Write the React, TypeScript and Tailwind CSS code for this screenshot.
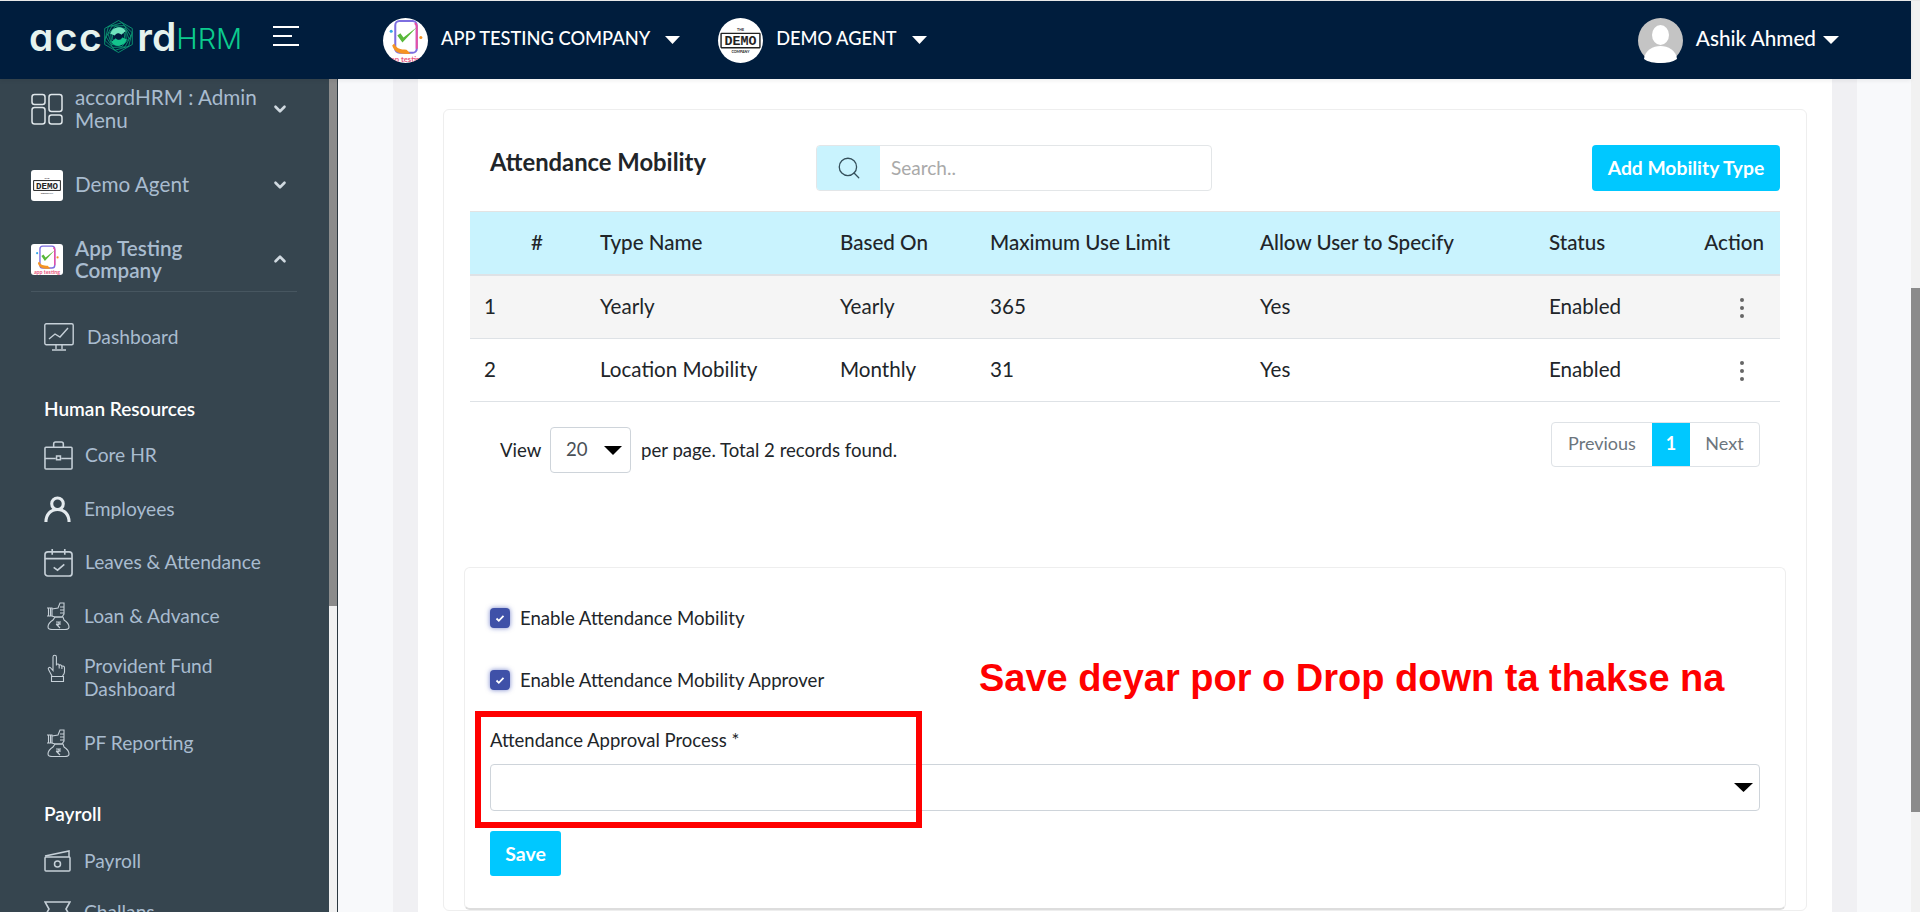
import React from 'react';
import { ChevronDown, ChevronUp, Search } from 'lucide-react';

const iconColor = '#c6d0d8';

function Triangle({ className }: { className: string }) {
  return (
    <svg viewBox="0 0 16 8" preserveAspectRatio="none" className={className} fill="currentColor">
      <path d="M0 0h16L8 8z" />
    </svg>
  );
}

// hexagon swirl in the logo, the "o" of accord
function LogoMark() {
  const rings = [0, 1, 2, 3, 4, 5];
  return (
    <svg viewBox="-17 -18 34 36" className="w-[31px] h-[35px] shrink-0">
      {rings.map((i) => {
        const r = 17.5 - i * 2;
        const pts = [0, 60, 120, 180, 240, 300]
          .map((a) => {
            const t = ((a + i * 14 - 90) * Math.PI) / 180;
            return `${(r * Math.cos(t)).toFixed(2)},${(r * Math.sin(t)).toFixed(2)}`;
          })
          .join(' ');
        return <polygon key={i} points={pts} fill="none" stroke="#0fb57f" strokeWidth="0.8" />;
      })}
      <path d="M-9 -3A9.500 9.500 0 0 1 8 -6L3 -2A4 4 0 0 0 -4 -1z" fill="#6fe3bc" />
      <path d="M9 3A9.500 9.500 0 0 1 -8 6L-3 2A4 4 0 0 0 4 1z" fill="#14c48c" />
      <circle r="3" fill="#001d3d" />
    </svg>
  );
}

function AppTestingLogo({ className }: { className: string }) {
  return (
    <svg viewBox="0 0 44 44" className={className}>
      <rect x="12" y="3" width="21" height="31" rx="4" fill="none" stroke="#7d6ee0" strokeWidth="2" />
      <path d="M31 5a4 4 0 0 1 2 3v22" fill="none" stroke="#e84fa5" strokeWidth="2" />
      <path d="M9 27c2 7 8 9 18 8l-4-4c-6 0-10-1-12-6z" fill="#f59323" />
      <path d="M14 17l5 7L33 9l-13 10-3-4z" fill="#59b83a" />
      <circle cx="8" cy="13" r="1.500" fill="#35a7e8" />
      <circle cx="37" cy="19" r="1.500" fill="#f59323" />
      <text x="22" y="43" textAnchor="middle" fontSize="7.500" fontWeight="700" fill="#e8567f" fontFamily="Lato, sans-serif">
        app testing
      </text>
    </svg>
  );
}

function DemoLogo({ className }: { className: string }) {
  return (
    <svg viewBox="0 0 44 44" className={className}>
      <path d="M3 15h38M3 29h38M3 15v14M41 15v14" fill="none" stroke="#222" strokeWidth="1.400" />
      <text x="22" y="12.500" textAnchor="middle" fontSize="3.500" fontWeight="700" fill="#222" fontFamily="Lato, sans-serif">THE</text>
      <text x="22" y="26.500" textAnchor="middle" fontSize="13" fontWeight="700" fill="#222" fontFamily="Liberation Mono, monospace">DEMO</text>
      <text x="22" y="34" textAnchor="middle" fontSize="3.500" fontWeight="700" fill="#222" fontFamily="Lato, sans-serif">COMPANY</text>
    </svg>
  );
}

function MenuGridIcon() {
  return (
    <svg viewBox="0 0 32 32" className="w-[32px] h-[32px] shrink-0" fill="none" stroke="#dfe6ea" strokeWidth="1.500">
      <rect x="1" y="1.500" width="13" height="10" rx="2.500" />
      <rect x="18" y="1.500" width="13" height="17" rx="2.500" />
      <rect x="1" y="14.500" width="13" height="16.500" rx="2.500" />
      <rect x="18" y="22" width="13" height="9" rx="2.500" />
    </svg>
  );
}

function DashboardIcon() {
  return (
    <svg viewBox="0 0 30 28" className="w-[30px] h-[28px]" fill="none" stroke={iconColor} strokeWidth="1.400">
      <rect x="0.800" y="0.800" width="28.400" height="21" rx="1.500" />
      <path d="M5 16l6-5 5 3 8-9" />
      <path d="M12 22v4M18 22v4M8 27h14" />
    </svg>
  );
}

function BriefcaseIcon() {
  return (
    <svg viewBox="0 0 30 30" className="w-[29px] h-[29px]" fill="none" stroke={iconColor} strokeWidth="1.600">
      <rect x="1" y="6.500" width="28" height="22.500" rx="1" />
      <path d="M10 6.500V3a2 2 0 0 1 2-2h6a2 2 0 0 1 2 2v3.500M1 18h11M18 18h11M13 15.500h4v4h-4z" />
    </svg>
  );
}

function UserIcon() {
  return (
    <svg viewBox="0 0 28 28" className="w-[27px] h-[27px]" fill="none" stroke="#e4eaee" strokeWidth="3.200">
      <circle cx="14" cy="8" r="6" />
      <path d="M2 27c0-8 5-13 12-13s12 5 12 13" />
    </svg>
  );
}

function CalendarIcon() {
  return (
    <svg viewBox="0 0 30 30" className="w-[29px] h-[29px]" fill="none" stroke={iconColor} strokeWidth="1.700">
      <rect x="1" y="4" width="28" height="25" rx="3" />
      <path d="M1 11h28M8.500 1v6M21.500 1v6M10 20l4 3 7-6" />
    </svg>
  );
}

function LoanIcon() {
  return (
    <svg viewBox="0 0 24 28" className="w-[24px] h-[28px]" fill="none" stroke={iconColor} strokeWidth="1.100">
      <path d="M1 6h5v8H1M2.500 6v8M4.500 6v8" />
      <path d="M6 7l6-1 2-5h4v11l-2 3H9l-3-1" />
      <path d="M14 5h4M14 8h4M14 11h4" />
      <path d="M9 15h8l1 3c3 2 5 5 5 7 0 2-2 2.500-4 2.500H6c-2 0-4-.5-4-2.500 0-2 2-5 5-7z" />
      <path d="M10 20h5M10 22h5M11 20c3 0 3 3 0 3l3 3" />
    </svg>
  );
}

// index finger up with a cuff at the wrist
function HandIcon() {
  return (
    <svg viewBox="0 0 20 28" className="w-[20px] h-[28px]" fill="none" stroke={iconColor} strokeWidth="1.100">
      <path d="M5 22L1.500 15.500c-.8-1.600 1-2.800 2.200-1.500L6 16.500V3a1.700 1.700 0 0 1 3.400 0v8.500" />
      <path d="M9.400 10.500c1-1 2.600-.6 2.800.8 1-.9 2.500-.4 2.700 1 1.200-.7 2.600 0 2.600 1.500V18c0 1.500-1 3-2 4" />
      <path d="M12.200 11.500v3M14.900 12.500v2.500" />
      <path d="M4.500 22.500h12v5h-12z" />
    </svg>
  );
}

function CashIcon() {
  return (
    <svg viewBox="0 0 27 22" className="w-[27px] h-[22px]" fill="none" stroke={iconColor} strokeWidth="1.500">
      <path d="M1 6l24-5v6" />
      <rect x="1" y="7" width="25" height="14" rx="1" />
      <circle cx="13.500" cy="14" r="3" />
    </svg>
  );
}

function ChallanIcon() {
  return (
    <svg viewBox="0 0 27 22" className="w-[27px] h-[22px]" fill="none" stroke={iconColor} strokeWidth="1.600">
      <path d="M1 1h25l-4 7 4 7H1l4-7z" />
    </svg>
  );
}

function CompanyRow({
  icon,
  label,
  open,
  className,
}: {
  icon: React.ReactNode;
  label: React.ReactNode;
  open?: boolean;
  className: string;
}) {
  return (
    <div className={`flex items-center pl-[31px] pr-[40px] ${className}`}>
      <div className="w-[44px] shrink-0 flex items-center">{icon}</div>
      <div className="flex-1 pb-[1px] text-[20.700px] leading-[23px] text-[#a9bccf]">{label}</div>
      {open ? (
        <ChevronUp size={18} strokeWidth={3.500} color="#d0d9e0" />
      ) : (
        <ChevronDown size={18} strokeWidth={3.500} color="#d0d9e0" />
      )}
    </div>
  );
}

function NavItem({
  icon,
  label,
  textLeft,
  className,
}: {
  icon: React.ReactNode;
  label: React.ReactNode;
  textLeft: string;
  className: string;
}) {
  return (
    <div className={`flex items-center pl-[44px] ${className}`}>
      <div className={`shrink-0 flex items-center ${textLeft}`}>{icon}</div>
      <div className="w-[190px] pb-[2px] text-[19.200px] leading-[23px] text-[#a9bccf]">{label}</div>
    </div>
  );
}

function Sidebar() {
  return (
    <aside className="w-[337px] shrink-0 flex border-r border-[#2c3840] box-content">
      <nav className="w-[329px] bg-[#36454f] overflow-hidden pt-[6px]">
        <CompanyRow
          className="h-[48px]"
          icon={<MenuGridIcon />}
          label="accordHRM : Admin Menu"
        />
        <CompanyRow
          className="h-[40px] mt-[32px]"
          icon={<DemoLogo className="w-[32px] h-[31px] bg-white rounded-[3px]" />}
          label="Demo Agent"
        />
        <CompanyRow
          className="h-[48px] mt-[30px]"
          open
          icon={<AppTestingLogo className="w-[32px] h-[31px] bg-white rounded-[3px]" />}
          label={<div className="w-[150px] font-semibold leading-[22px]">App Testing Company</div>}
        />
        <div className="h-px bg-[#475660] ml-[31px] mr-[32px] mt-[8px]" />
        <NavItem className="h-[36px] mt-[27px]" textLeft="w-[43px]" icon={<DashboardIcon />} label="Dashboard" />
        <div className="h-[24px] mt-[42px] pl-[44px] text-[19px] leading-[24px] font-semibold text-white">Human Resources</div>
        <NavItem className="h-[36px] mt-[16px]" textLeft="w-[41px]" icon={<BriefcaseIcon />} label="Core HR" />
        <NavItem className="h-[36px] mt-[18px]" textLeft="w-[40px]" icon={<UserIcon />} label="Employees" />
        <NavItem className="h-[36px] mt-[17px]" textLeft="w-[41px]" icon={<CalendarIcon />} label="Leaves & Attendance" />
        <NavItem className="h-[36px] mt-[18px]" textLeft="w-[40px] pl-[2px]" icon={<LoanIcon />} label="Loan & Advance" />
        <NavItem
          className="h-[48px] mt-[20px]"
          textLeft="w-[40px] pl-[3px] self-start"
          icon={<HandIcon />}
          label="Provident Fund Dashboard"
        />
        <NavItem className="h-[36px] mt-[23px]" textLeft="w-[40px] pl-[2px]" icon={<LoanIcon />} label="PF Reporting" />
        <div className="h-[24px] mt-[41px] pl-[44px] text-[19px] leading-[24px] font-semibold text-white">Payroll</div>
        <NavItem className="h-[36px] mt-[17px]" textLeft="w-[40px]" icon={<CashIcon />} label="Payroll" />
        <NavItem className="h-[36px] mt-[15px]" textLeft="w-[40px]" icon={<ChallanIcon />} label="Challans" />
      </nav>
      <div className="w-[8px] bg-[#f1f1f1]">
        <div className="h-[527px] bg-[#8b8b8b]" />
      </div>
    </aside>
  );
}

function Header() {
  return (
    <header className="h-[78px] shrink-0 bg-[#001d3d] flex items-center pl-[31px] pr-[72px] text-white relative z-10 shadow-[0_2px_4px_rgba(0,0,0,0.06)]">
      <div className="w-[242px] flex items-center h-[50px] -mt-[8px] [font-family:Inter,sans-serif] [font-feature-settings:'cv11']">
        <span className="text-[39px] leading-none font-semibold text-[#e6f3ee] tracking-[1.500px] -ml-[2px]">acc</span>
        <LogoMark />
        <span className="text-[39px] leading-none font-semibold text-[#e6f3ee] ml-[3px]">rd</span>
        <span className="text-[29px] leading-none font-light text-[#0ccb8d] mt-[4px]">HRM</span>
      </div>
      <div className="w-[26px] flex flex-col gap-[7px] -mt-[8px]">
        <div className="h-[2px] w-[26px] bg-white" />
        <div className="h-[2px] w-[19px] bg-white" />
        <div className="h-[2px] w-[26px] bg-white" />
      </div>
      <AppTestingLogo className="w-[45px] h-[45px] rounded-full bg-white ml-[84px] shrink-0" />
      <span className="ml-[13px] -mt-[2px] text-[18.300px] font-medium whitespace-nowrap">APP TESTING COMPANY</span>
      <Triangle className="w-[15px] h-[8px] ml-[15px] text-white" />
      <DemoLogo className="w-[45px] h-[45px] rounded-full bg-white ml-[38px] shrink-0" />
      <span className="ml-[13px] -mt-[2px] text-[18.200px] font-medium whitespace-nowrap">DEMO AGENT</span>
      <Triangle className="w-[15px] h-[8px] ml-[15px] text-white" />
      <div className="ml-auto flex items-center">
        <svg viewBox="0 0 45 45" className="w-[45px] h-[45px] shrink-0">
          <circle cx="22.500" cy="22.500" r="22.500" fill="#c4c4c4" />
          <ellipse cx="22.500" cy="17" rx="8.500" ry="10" fill="#fff" />
          <path d="M6 41c1-9 9-13 16.500-13S38 32 39 41c-4.500 3-10 4-16.500 4S10 44 6 41z" fill="#fff" />
        </svg>
        <span className="ml-[13px] -mt-[2px] text-[20.700px] font-medium whitespace-nowrap">Ashik Ahmed</span>
        <Triangle className="w-[16px] h-[8px] ml-[7px] text-white" />
      </div>
    </header>
  );
}

const rows = [
  { id: '1', name: 'Yearly', based: 'Yearly', limit: '365', allow: 'Yes', status: 'Enabled', bg: 'bg-[#f5f5f5]' },
  { id: '2', name: 'Location Mobility', based: 'Monthly', limit: '31', allow: 'Yes', status: 'Enabled', bg: 'bg-white' },
];

function MobilityTable() {
  const cols = 'grid grid-cols-[130px_240px_150px_270px_289px_1fr] items-center';
  return (
    <div className="mt-[10px] text-[20.600px] text-[#212529]">
      <div className={`${cols} h-[64px] pb-[2px] bg-[#c9f3fe] border-b-2 border-[#dee2e6] font-medium`}>
        <div className="pl-[61px]">#</div>
        <div>Type Name</div>
        <div>Based On</div>
        <div>Maximum Use Limit</div>
        <div>Allow User to Specify</div>
        <div className="flex justify-between pr-[16px]">
          <span>Status</span>
          <span>Action</span>
        </div>
      </div>
      {rows.map((r) => (
        <div key={r.id} className={`${cols} h-[63px] border-b border-[#dee2e6] ${r.bg}`}>
          <div className="pl-[14px] pb-[2px]">{r.id}</div>
          <div className="pb-[2px]">{r.name}</div>
          <div className="pb-[2px]">{r.based}</div>
          <div className="pb-[2px]">{r.limit}</div>
          <div className="pb-[2px]">{r.allow}</div>
          <div className="flex justify-between items-center pr-[36px]">
            <span className="pb-[2px]">{r.status}</span>
            <span className="flex flex-col gap-[4px] mt-[3px]">
              <span className="w-[4px] h-[4px] rounded-full bg-[#666]" />
              <span className="w-[4px] h-[4px] rounded-full bg-[#666]" />
              <span className="w-[4px] h-[4px] rounded-full bg-[#666]" />
            </span>
          </div>
        </div>
      ))}
    </div>
  );
}

function CheckRow({ label, className }: { label: string; className: string }) {
  return (
    <div className={`flex items-center h-[20px] ${className}`}>
      <span className="w-[20px] h-[20px] rounded-[4px] bg-[#3f51a8] shadow-[0_0_5px_rgba(63,81,181,0.7)] flex items-center justify-center">
        <svg viewBox="0 0 10 10" className="w-[10px] h-[10px]" fill="none" stroke="#fff" strokeWidth="1.800">
          <path d="M1.500 5.500l2.300 2.300 4.700-5" />
        </svg>
      </span>
      <span className="ml-[10px] mt-[2px] text-[18.600px] text-[#212529]">{label}</span>
    </div>
  );
}

function SettingsCard() {
  return (
    <div className="relative -ml-[6px] -mr-[6px] mt-[94px] border border-[#eeeeee] border-b-2 border-b-[#dddddd] rounded-md pl-[25px] pr-[25px] pt-[40px] pb-[32px] bg-white">
      <CheckRow label="Enable Attendance Mobility" className="" />
      <CheckRow label="Enable Attendance Mobility Approver" className="mt-[42px]" />
      <div className="mt-[38px] h-[24px] leading-[24px] text-[18.500px] text-[#212529]">Attendance Approval Process&nbsp;*</div>
      <div className="mt-[12px] h-[47px] border border-[#ced4da] rounded-[4px] flex items-center justify-end pr-[6px]">
        <Triangle className="w-[19px] h-[9px] text-black" />
      </div>
      <button className="mt-[20px] block w-[71px] h-[45px] rounded-[3px] bg-[#00c8ff] text-white text-[19.500px] font-bold">Save</button>

      {/* annotation drawn on the screenshot */}
      <div className="absolute left-[10px] top-[143px] w-[447px] h-[117px] border-[6px] border-[#ff0000]" />
      <div className="absolute left-[514px] top-[87px] text-[38px] leading-[46px] font-bold text-[#ff0000] whitespace-nowrap [font-family:'Liberation_Sans',sans-serif]">
        Save deyar por o Drop down ta thakse na
      </div>
    </div>
  );
}

function MobilityCard() {
  return (
    <div className="border border-[#eeeeee] rounded-md pl-[26px] pr-[26px] pt-[35px] bg-white">
      <div className="flex items-start h-[56px] pb-[10px] border-b border-[#e3e3e3] box-content -mb-[10px]">
        <div className="w-[346px] pl-[20px] pt-[3px] text-[23.800px] leading-[28px] font-bold text-[#212529]">Attendance Mobility</div>
        <div className="w-[396px] h-[46px] flex border border-[#e3e6e8] rounded-[4px] overflow-hidden">
          <div className="w-[63px] bg-[#c9f3fe] flex items-center justify-center">
            <Search size={26} strokeWidth={1.200} color="#35505c" />
          </div>
          <div className="flex-1 flex items-center pl-[11px] text-[19px] text-[#a9a9a9]">Search..</div>
        </div>
        <button className="ml-auto w-[188px] h-[46px] rounded-[4px] bg-[#00c8ff] text-white text-[19.300px] font-bold">Add Mobility Type</button>
      </div>
      <MobilityTable />
      <div className="mt-[25px] flex items-start text-[18.600px] text-[#212529]">
        <div className="w-[80px] pl-[30px] pt-[2px] h-[46px] flex items-center">View</div>
        <div className="w-[81px] h-[46px] border border-[#ced4da] rounded-[4px] flex items-center justify-between pl-[15px] pr-[8px] text-[#495057]">
          20
          <Triangle className="w-[18px] h-[9px] text-black" />
        </div>
        <div className="ml-[10px] pt-[2px] h-[46px] flex items-center">per page. Total 2 records found.</div>
        <div className="ml-auto mr-[20px] -mt-[5px] h-[45px] flex border border-[#dee2e6] rounded-[4px] text-[18px] text-[#6c757d]">
          <span className="w-[100px] pb-[2px] flex items-center justify-center">Previous</span>
          <span className="w-[38px] pb-[2px] flex items-center justify-center bg-[#00c8ff] text-white font-bold">1</span>
          <span className="w-[69px] pb-[2px] flex items-center justify-center">Next</span>
        </div>
      </div>
      <SettingsCard />
    </div>
  );
}

export default function App() {
  return (
    <div className="h-screen overflow-hidden flex bg-white [font-family:Lato,sans-serif] border-t border-[#e8e8e8]">
      <div className="flex-1 flex flex-col min-w-0">
        <Header />
        <div className="flex-1 flex min-h-0">
          <Sidebar />
          <div className="w-[55px] bg-[#f8f9fb] shrink-0" />
          <div className="w-[25px] bg-[#f0f0f3] shrink-0" />
          <main className="flex-1 min-w-0 overflow-hidden pl-[25px] pr-[25px] pt-[30px]">
            <MobilityCard />
          </main>
          <div className="w-[25px] bg-[#f0f0f3] shrink-0" />
          <div className="w-[54px] bg-[#f8f9fb] shrink-0" />
        </div>
      </div>
      <div className="w-[9px] shrink-0 bg-[#f1f1f1] pt-[287px]">
        <div className="h-[524px] bg-[#8b8b8b]" />
      </div>
    </div>
  );
}
